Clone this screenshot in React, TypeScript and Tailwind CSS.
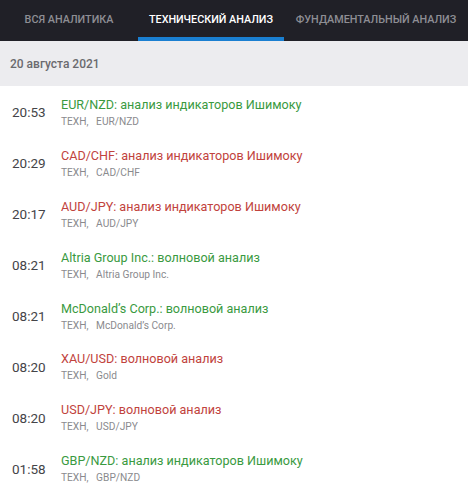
const items = [
  { time: "20:53", title: "EUR/NZD: анализ индикаторов Ишимоку", tag: "EUR/NZD", up: true },
  { time: "20:29", title: "CAD/CHF: анализ индикаторов Ишимоку", tag: "CAD/CHF", up: false },
  { time: "20:17", title: "AUD/JPY: анализ индикаторов Ишимоку", tag: "AUD/JPY", up: false },
  { time: "08:21", title: "Altria Group Inc.: волновой анализ", tag: "Altria Group Inc.", up: true },
  { time: "08:21", title: "McDonald’s Corp.: волновой анализ", tag: "McDonald’s Corp.", up: true },
  { time: "08:20", title: "XAU/USD: волновой анализ", tag: "Gold", up: false },
  { time: "08:20", title: "USD/JPY: волновой анализ", tag: "USD/JPY", up: false },
  { time: "01:58", title: "GBP/NZD: анализ индикаторов Ишимоку", tag: "GBP/NZD", up: true },
];

export default function App() {
  return (
    <div className="w-[468px] h-[500px] overflow-hidden bg-white font-['Roboto',sans-serif]">
      <nav className="flex h-[41px] bg-[#202027] text-[10.8px] font-medium uppercase">
        <div className="w-[138px] flex items-center justify-center text-[#8e8e94]">Вся аналитика</div>
        <div className="w-[146px] flex items-center justify-center text-white border-b-[4px] border-[#1a7fd1] pt-[4px]">
          Технический анализ
        </div>
        <div className="flex-1 flex items-center justify-center text-[#8e8e94]">Фундаментальный анализ</div>
      </nav>
      <div className="h-[45px] bg-[#ececef] flex items-center px-[10px] text-[12px] font-medium text-[#6a6a6e]">
        20 августа 2021
      </div>
      <ul className="pt-[1px]">
        {items.map((it, i) => (
          <li key={i} className="h-[50.9px] flex items-center">
            <span className="w-[61px] pl-[12px] text-[13.5px] text-[#444448]">{it.time}</span>
            <div className="flex flex-col">
              <span className={`text-[12.6px] leading-[17px] ${it.up ? "text-[#3a9a3f]" : "text-[#c1433d]"}`}>
                {it.title}
              </span>
              <span className="text-[10.2px] leading-[15px] mt-[1px] text-[#8a8a8e] whitespace-pre">
                {"ТЕХН,   " + it.tag}
              </span>
            </div>
          </li>
        ))}
      </ul>
    </div>
  );
}
